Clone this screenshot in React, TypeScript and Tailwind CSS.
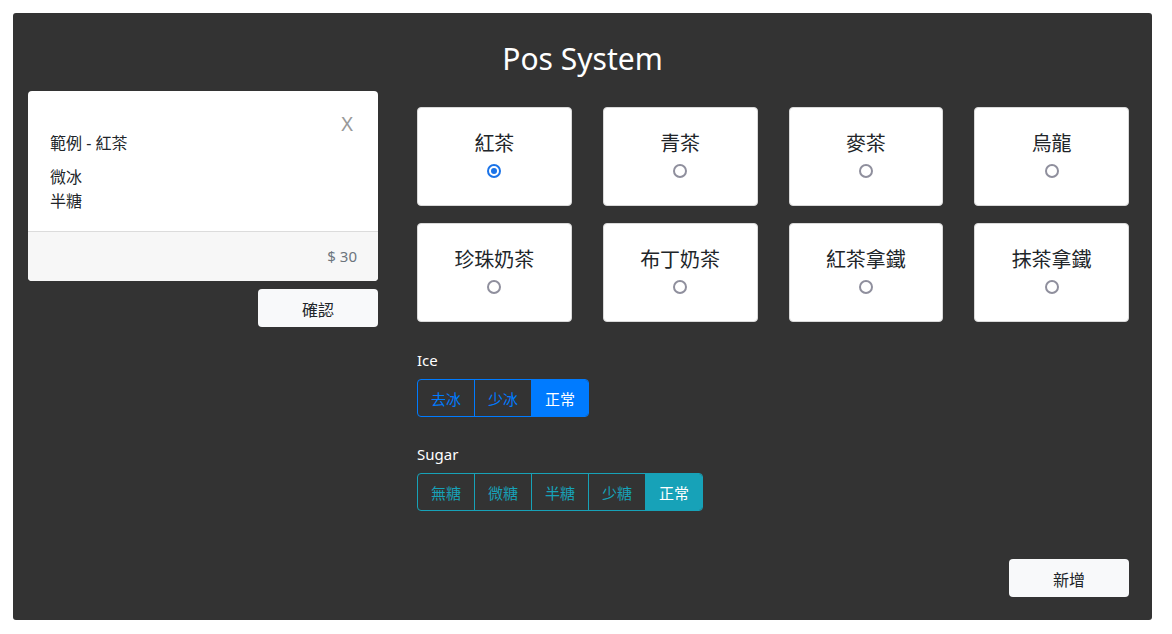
import React from 'react';

const drinks = ['紅茶', '青茶', '麥茶', '烏龍', '珍珠奶茶', '布丁奶茶', '紅茶拿鐵', '抹茶拿鐵'];
const iceLevels = ['去冰', '少冰', '正常'];
const sugarLevels = ['無糖', '微糖', '半糖', '少糖', '正常'];

const font = { fontFamily: '"Noto Sans", "Noto Sans CJK TC", sans-serif' };

function OptionGroup({
  items,
  active,
  tone,
}: {
  items: string[];
  active: number;
  tone: 'blue' | 'teal';
}) {
  const border = tone === 'blue' ? 'border-[#007bff]' : 'border-[#17a2b8]';
  return (
    <div className={`mt-[9px] flex w-fit overflow-hidden rounded-[4px] border ${border}`}>
      {items.map((label, i) => {
        const on = i === active;
        let cls = '';
        if (tone === 'blue') {
          cls = on ? 'bg-[#007bff] text-white' : 'text-[#007bff]';
        } else {
          cls = on ? 'bg-[#17a2b8] text-white' : 'text-[#17a2b8]';
        }
        const sep =
          i > 0
            ? tone === 'blue'
              ? 'w-[57px] border-l border-[#007bff]'
              : 'w-[57px] border-l border-[#17a2b8]'
            : 'w-[56px]';
        return (
          <div
            key={label}
            className={`flex h-[36px] items-center justify-center pt-[2px] text-[15px] ${cls} ${sep}`}
          >
            {label}
          </div>
        );
      })}
    </div>
  );
}

function Radio({ checked }: { checked: boolean }) {
  if (checked) {
    return (
      <span className="mt-[6px] flex h-[14px] w-[14px] items-center justify-center rounded-full border-2 border-[#1a73e8] bg-white">
        <span className="h-[6px] w-[6px] rounded-full bg-[#1a73e8]" />
      </span>
    );
  }
  return <span className="mt-[6px] block h-[14px] w-[14px] rounded-full border-2 border-[#8f8f9d] bg-white" />;
}

export default function App() {
  return (
    <div className="min-h-[634px] bg-white pt-[13px]" style={font}>
      <div className="ml-[13px] flex h-[607px] w-[1139px] flex-col rounded-[3px] bg-[#333333] px-[15px] pt-[28px]">
        <h1 className="h-[36px] text-center text-[30px] leading-[36px] text-white">Pos System</h1>

        <div className="mt-[14px] flex">
          {/* order card */}
          <div className="w-[350px]">
            <div className="overflow-hidden rounded-[4px] bg-white">
              <div className="flex justify-between pl-[22px] pr-[25px] pb-[18px] pt-[21px]">
                <div className="mt-[19px] text-[16px] leading-[24px] text-[#212529]">
                  <div>範例 - 紅茶</div>
                  <div className="mt-[10px]">微冰</div>
                  <div>半糖</div>
                </div>
                <div className="text-[20px] leading-[24px] text-[#999]">X</div>
              </div>
              <div className="flex h-[50px] items-center justify-end border-t border-[#dcdcdc] bg-[#f7f7f7] pr-[21px] text-[15px] text-[#6c757d]">
                $ 30
              </div>
            </div>
            <div className="mt-[8px] flex justify-end">
              <button className="h-[38px] w-[120px] rounded-[4px] bg-[#f8f9fa] pt-[3px] text-[16px] text-[#212529]">
                確認
              </button>
            </div>
          </div>

          {/* menu */}
          <div className="ml-[39px] flex w-[712px] flex-col pt-[16px]">
            <div className="grid grid-cols-4 gap-x-[31px] gap-y-[17px]">
              {drinks.map((d, i) => (
                <div
                  key={d}
                  className="flex h-[99px] flex-col items-center rounded-[4px] border border-[#d9d9d9] bg-white pt-[22px]"
                >
                  <span className="text-[20px] leading-[28px] text-[#212529]">{d}</span>
                  <Radio checked={i === 0} />
                </div>
              ))}
            </div>

            <div className="mt-[28px] text-[15px] leading-[20px] text-white">Ice</div>
            <OptionGroup items={iceLevels} active={2} tone="blue" />

            <div className="mt-[27px] text-[15px] leading-[20px] text-white">Sugar</div>
            <OptionGroup items={sugarLevels} active={4} tone="teal" />

            <div className="mt-[48px] flex justify-end">
              <button className="h-[38px] w-[120px] rounded-[4px] bg-[#f8f9fa] pt-[3px] text-[16px] text-[#212529]">
                新增
              </button>
            </div>
          </div>
        </div>
      </div>
    </div>
  );
}
